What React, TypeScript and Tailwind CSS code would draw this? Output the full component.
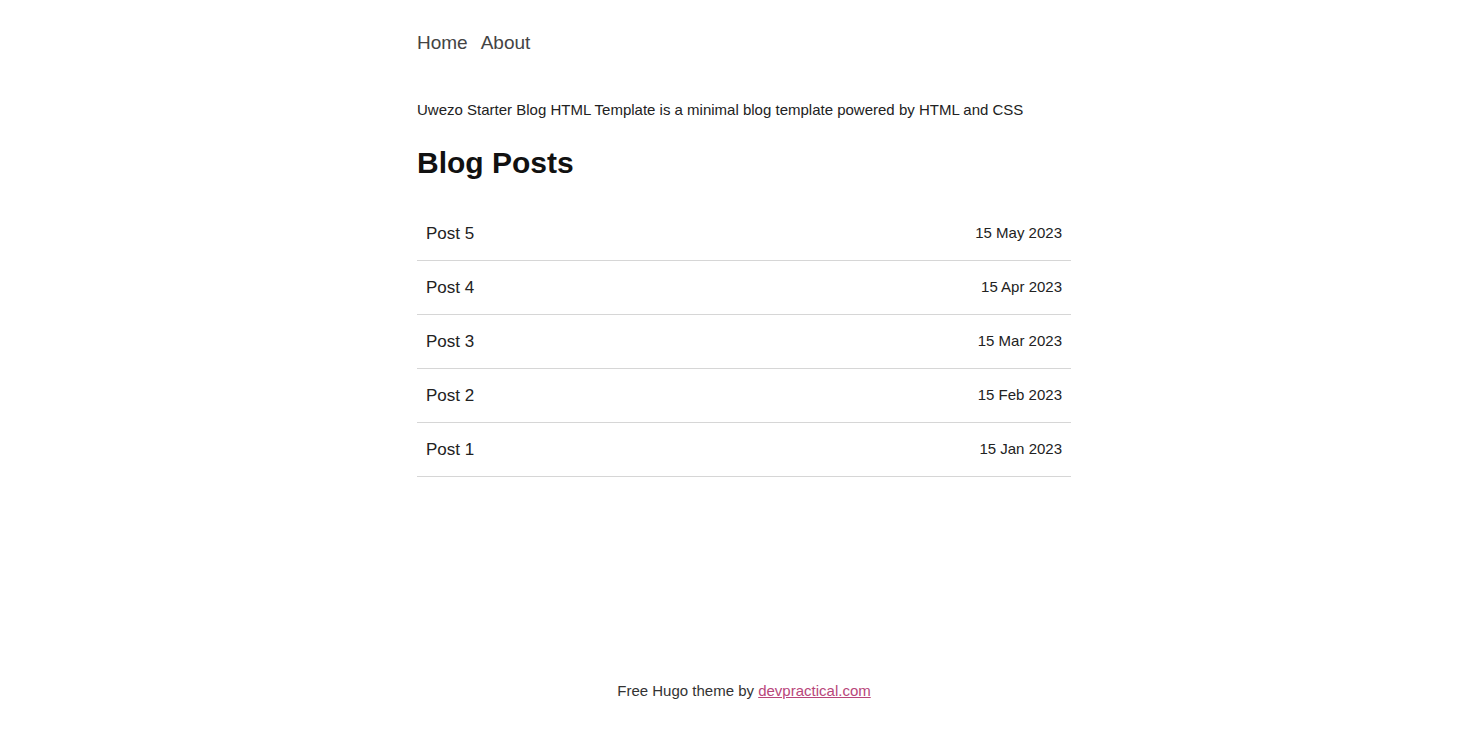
const POSTS = [
  { title: "Post 5", date: "15 May 2023" },
  { title: "Post 4", date: "15 Apr 2023" },
  { title: "Post 3", date: "15 Mar 2023" },
  { title: "Post 2", date: "15 Feb 2023" },
  { title: "Post 1", date: "15 Jan 2023" },
];

export default function App() {
  return (
    <div className="flex min-h-[736px] flex-col bg-white font-['Liberation_Sans',Arial,sans-serif]">
      <main className="ml-[417px] w-[654px] flex-1">
        <nav className="flex gap-[13px] pt-[31px] text-[19px] leading-[24px] text-[#444]">
          <a href="#">Home</a>
          <a href="#">About</a>
        </nav>

        <p className="mt-[45px] text-[15px] leading-[20px] text-[#222]">
          Uwezo Starter Blog HTML Template is a minimal blog template powered by HTML and CSS
        </p>

        <h1 className="mt-[25px] text-[30px] font-bold leading-[36px] text-[#111]">Blog Posts</h1>

        <ul className="mt-[26px]">
          {POSTS.map((post) => (
            <li
              key={post.title}
              className="flex h-[54px] items-center justify-between border-b border-[#d6d6d6] px-[9px]"
            >
              <a href="#" className="text-[17px] text-[#222]">
                {post.title}
              </a>
              <span className="-mt-[1px] text-[15px] text-[#222]">{post.date}</span>
            </li>
          ))}
        </ul>
      </main>

      <footer className="ml-[417px] w-[654px] pb-[36px] text-center text-[15px] leading-[18px] text-[#333]">
        Free Hugo theme by{" "}
        <a href="#" className="text-[#b8467a] underline">
          devpractical.com
        </a>
      </footer>
    </div>
  );
}
